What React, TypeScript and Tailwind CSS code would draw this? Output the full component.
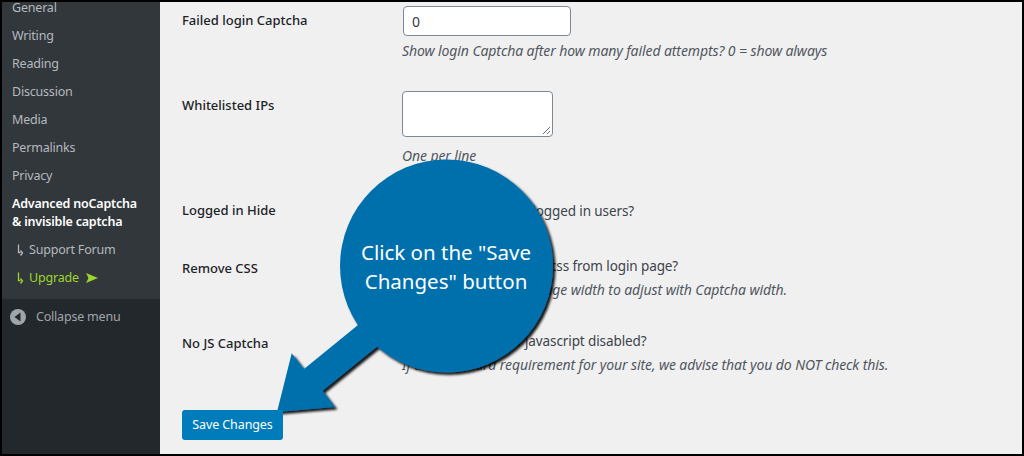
import React from "react";

const font = { fontFamily: '"Noto Sans", sans-serif' };
const desc = "text-[14px] italic leading-[20px] tracking-[-0.1px] text-[#50575e]";
const body = "text-[13.5px] leading-[20px] tracking-[-0.1px] text-[#3c434a]";

function Row({ label, top, children }: { label: string; top: string; children?: React.ReactNode }) {
  return (
    <div className={`flex ${top}`}>
      <div className="w-[220px] shrink-0 text-[13px] font-medium leading-[20px] text-[#1d2327]">{label}</div>
      <div className="flex-1">{children}</div>
    </div>
  );
}

function Check() {
  return <span className="mr-[6px] inline-block h-[16px] w-[16px] rounded-[3px] border border-[#7e8993] bg-white align-[-3px]" />;
}

function Hook() {
  return (
    <svg width="7" height="12" viewBox="0 0 7 12" className="mr-[5px] shrink-0" fill="none" stroke="currentColor" strokeWidth="1.3">
      <path d="M1.5 0.5V8.5H3.5M3.5 6.5L5.5 9L3.5 11.5" />
    </svg>
  );
}

export default function App() {
  const items = ["General", "Writing", "Reading", "Discussion", "Media", "Permalinks", "Privacy"];
  return (
    <div style={font} className="relative h-[456px] w-[1024px] overflow-hidden border-2 border-black bg-[#f0f0f1]">
      <div className="flex h-full">
        <aside className="flex w-[158px] shrink-0 flex-col bg-[#23282d] text-[12.5px] tracking-[-0.2px]">
          <div className="bg-[#32373c] pb-[7px] pl-[10px] pr-2">
            <div className="-mt-[8px]">
              {items.map((t) => (
                <div key={t} className="h-[28px] leading-[28px] text-[#b4b9be]">{t}</div>
              ))}
            </div>
            <div className="pt-[5px] font-semibold leading-[18px] text-white">
              <div>Advanced noCaptcha</div>
              <div>&amp; invisible captcha</div>
            </div>
            <div className="mt-[5px] flex h-[28px] items-center pl-[5px] text-[#b4b9be]"><Hook />Support Forum</div>
            <div className="flex h-[28px] items-center pl-[5px] text-[#9dd62a]">
              <Hook />Upgrade
              <svg width="12" height="10" viewBox="0 0 12 10" className="ml-[7px]" fill="currentColor">
                <path d="M0 0L12 5L0 10L2.5 5z" />
              </svg>
            </div>
          </div>
          <div className="flex items-center gap-[10px] pl-[8px] pt-[9px] text-[#a0a5aa]">
            <svg width="16" height="16" viewBox="0 0 16 16">
              <circle cx="8" cy="8" r="8" fill="#a0a5aa" />
              <path d="M10.5 3.5v9L4.5 8z" fill="#23282d" />
            </svg>
            <span className="leading-[18px]">Collapse menu</span>
          </div>
        </aside>
        <main className="flex-1 pl-[22px]">
          <Row label="Failed login Captcha" top="pt-[8px]">
            <div className="-mt-[4px] ml-[1px] flex h-[30px] w-[168px] items-center rounded border border-[#7e8993] bg-white pl-[8px] text-[14px] text-[#32373c]">0</div>
            <p className={`mt-[5px] ${desc}`}>Show login Captcha after how many failed attempts? 0 = show always</p>
          </Row>
          <Row label="Whitelisted IPs" top="pt-[34px]">
            <div className="relative -mt-[4px] h-[46px] w-[151px] rounded border border-[#7e8993] bg-white">
              <svg width="9" height="9" viewBox="0 0 9 9" className="absolute bottom-[1px] right-[1px]" stroke="#6b7280" strokeWidth="1">
                <path d="M1 8L8 1M5 8L8 5" />
              </svg>
            </div>
            <p className={`mt-[9px] ${desc}`}>One per line</p>
          </Row>
          <Row label="Logged in Hide" top="pt-[34px]">
            <p className={`mt-[1px] ${body}`}><Check />Hide Captcha for logged in users?</p>
          </Row>
          <Row label="Remove CSS" top="pt-[37px]">
            <p className={`-mt-[2px] ${body}`}><Check />Remove Captcha v2 css from login page?</p>
            <p className={`mt-[4px] ${desc}`}>Also change the login page width to adjust with Captcha width.</p>
          </Row>
          <Row label="No JS Captcha" top="pt-[33px]">
            <p className={`-mt-[2px] ${body}`}><Check />Show captcha if javascript disabled?</p>
            <p className={`mt-[4px] ${desc}`}>If that is a hard requirement for your site, we advise that you do NOT check this.</p>
          </Row>
          <div className="relative z-10 mt-[35px] flex h-[30px] w-[101px] items-center justify-center rounded-[3px] bg-[#007cba] text-[12.5px] tracking-[-0.1px] text-white">Save Changes</div>
        </main>
      </div>
      <svg className="absolute left-[-2px] top-[-2px]" width="1024" height="456" viewBox="0 0 1024 456">
        <defs>
          <filter id="s" x="-20%" y="-20%" width="140%" height="140%">
            <feDropShadow dx="2.5" dy="2.5" stdDeviation="1.3" floodColor="#000" floodOpacity="0.9" />
          </filter>
        </defs>
        <g filter="url(#s)" fill="#006fad">
          <path d="M358 325L304 369L291.7 353.3L277 412L335 407L322.7 390.7L377 346.7L400 340z" />
          <circle cx="446.5" cy="266" r="106.5" />
        </g>
      </svg>
      <div className="absolute left-[338px] top-[236px] w-[212px] text-center text-[20.5px] leading-[29px] text-white">
        Click on the "Save Changes" button
      </div>
    </div>
  );
}
